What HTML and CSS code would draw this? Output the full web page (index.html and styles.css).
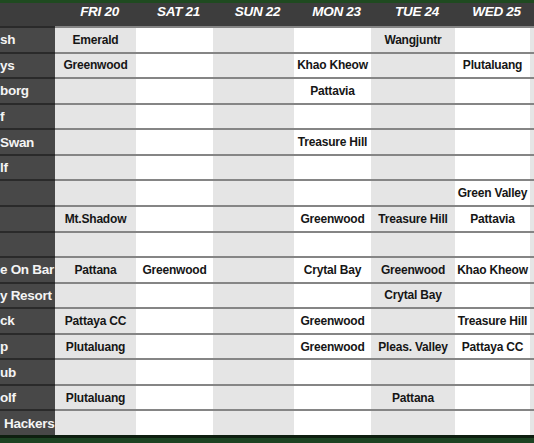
FILE: index.html
```html
<!DOCTYPE html>
<html>
<head>
<meta charset="utf-8">
<link rel="stylesheet" href="styles.css">
</head>
<body>
<div class="frame">
  <div class="sheet">
    <div class="row head">
      <div class="c name"></div>
      <div class="c">FRI 20</div>
      <div class="c">SAT 21</div>
      <div class="c">SUN 22</div>
      <div class="c">MON 23</div>
      <div class="c">TUE 24</div>
      <div class="c">WED 25</div>
      <div class="c"></div>
    </div>
    <div class="row">
      <div class="c name">sh</div>
      <div class="c">Emerald</div><div class="c"></div><div class="c"></div><div class="c"></div>
      <div class="c">Wangjuntr</div><div class="c"></div><div class="c"></div>
    </div>
    <div class="row">
      <div class="c name">ys</div>
      <div class="c">Greenwood</div><div class="c"></div><div class="c"></div><div class="c">Khao Kheow</div>
      <div class="c"></div><div class="c">Plutaluang</div><div class="c"></div>
    </div>
    <div class="row">
      <div class="c name">borg</div>
      <div class="c"></div><div class="c"></div><div class="c"></div><div class="c">Pattavia</div>
      <div class="c"></div><div class="c"></div><div class="c"></div>
    </div>
    <div class="row">
      <div class="c name">f</div>
      <div class="c"></div><div class="c"></div><div class="c"></div><div class="c"></div>
      <div class="c"></div><div class="c"></div><div class="c"></div>
    </div>
    <div class="row">
      <div class="c name">Swan</div>
      <div class="c"></div><div class="c"></div><div class="c"></div><div class="c">Treasure Hill</div>
      <div class="c"></div><div class="c"></div><div class="c"></div>
    </div>
    <div class="row">
      <div class="c name">lf</div>
      <div class="c"></div><div class="c"></div><div class="c"></div><div class="c"></div>
      <div class="c"></div><div class="c"></div><div class="c"></div>
    </div>
    <div class="row">
      <div class="c name"></div>
      <div class="c"></div><div class="c"></div><div class="c"></div><div class="c"></div>
      <div class="c"></div><div class="c">Green Valley</div><div class="c"></div>
    </div>
    <div class="row">
      <div class="c name"></div>
      <div class="c">Mt.Shadow</div><div class="c"></div><div class="c"></div><div class="c">Greenwood</div>
      <div class="c">Treasure Hill</div><div class="c">Pattavia</div><div class="c"></div>
    </div>
    <div class="row">
      <div class="c name"></div>
      <div class="c"></div><div class="c"></div><div class="c"></div><div class="c"></div>
      <div class="c"></div><div class="c"></div><div class="c"></div>
    </div>
    <div class="row">
      <div class="c name">e On Bar</div>
      <div class="c">Pattana</div><div class="c">Greenwood</div><div class="c"></div><div class="c">Crytal Bay</div>
      <div class="c">Greenwood</div><div class="c">Khao Kheow</div><div class="c"></div>
    </div>
    <div class="row">
      <div class="c name">y Resort</div>
      <div class="c"></div><div class="c"></div><div class="c"></div><div class="c"></div>
      <div class="c">Crytal Bay</div><div class="c"></div><div class="c"></div>
    </div>
    <div class="row">
      <div class="c name">ck</div>
      <div class="c">Pattaya CC</div><div class="c"></div><div class="c"></div><div class="c">Greenwood</div>
      <div class="c"></div><div class="c">Treasure Hill</div><div class="c"></div>
    </div>
    <div class="row">
      <div class="c name">p</div>
      <div class="c">Plutaluang</div><div class="c"></div><div class="c"></div><div class="c">Greenwood</div>
      <div class="c">Pleas. Valley</div><div class="c">Pattaya CC</div><div class="c"></div>
    </div>
    <div class="row">
      <div class="c name">ub</div>
      <div class="c"></div><div class="c"></div><div class="c"></div><div class="c"></div>
      <div class="c"></div><div class="c"></div><div class="c"></div>
    </div>
    <div class="row">
      <div class="c name">olf</div>
      <div class="c">Plutaluang</div><div class="c"></div><div class="c"></div><div class="c"></div>
      <div class="c">Pattana</div><div class="c"></div><div class="c"></div>
    </div>
    <div class="row">
      <div class="c name lead">Hackers</div>
      <div class="c"></div><div class="c"></div><div class="c"></div><div class="c"></div>
      <div class="c"></div><div class="c"></div><div class="c"></div>
    </div>
  </div>
</div>
</body>
</html>
```

FILE: styles.css
```css
html, body {
  margin: 0;
  padding: 0;
  background: #ffffff;
}

.frame {
  width: 534px;
  height: 443px;
  overflow: hidden;
  border-top: 3px solid #1f4a20;
  box-sizing: border-box;
  background: #1c4322;
  display: flex;
  flex-direction: column;
}

.sheet {
  height: 435px;
  flex: 0 0 435px;
  display: flex;
  flex-direction: column;
  border-bottom: 3px solid #0e1f10;
  box-sizing: border-box;
  background: #fff;
}

.row {
  display: grid;
  grid-template-columns: 55px 81px 77px 81px 77px 84px 75px 1fr;
  flex: 1;
  min-height: 0;
}

.row.head {
  flex: 0 0 23px;
  background: #3d3d3d;
}

.c {
  font-family: "Liberation Sans", Arial, sans-serif;
  font-weight: bold;
  font-size: 12px;
  letter-spacing: -0.2px;
  color: #161616;
  display: flex;
  align-items: center;
  justify-content: center;
  white-space: nowrap;
  overflow: hidden;
  border-top: 2px solid #858585;
  background: #ffffff;
}

.c:nth-child(2),
.c:nth-child(4),
.c:nth-child(6),
.c:nth-child(8) {
  background: #e5e5e5;
}

.row .c.name {
  background: #484848;
  border-top-color: #2a2a2a;
  color: #f4f4f4;
  font-size: 13.5px;
  letter-spacing: -0.3px;
  justify-content: flex-start;
}

.name.lead {
  padding-left: 4px;
}

.head .c {
  background: #3d3d3d;
  border-top: none;
  color: #ffffff;
  font-style: italic;
  font-size: 13.5px;
  letter-spacing: -0.3px;
  padding-left: 8px;
  padding-bottom: 6px;
  box-sizing: border-box;
}

.head .c.name {
  background: #3d3d3d;
}
```
